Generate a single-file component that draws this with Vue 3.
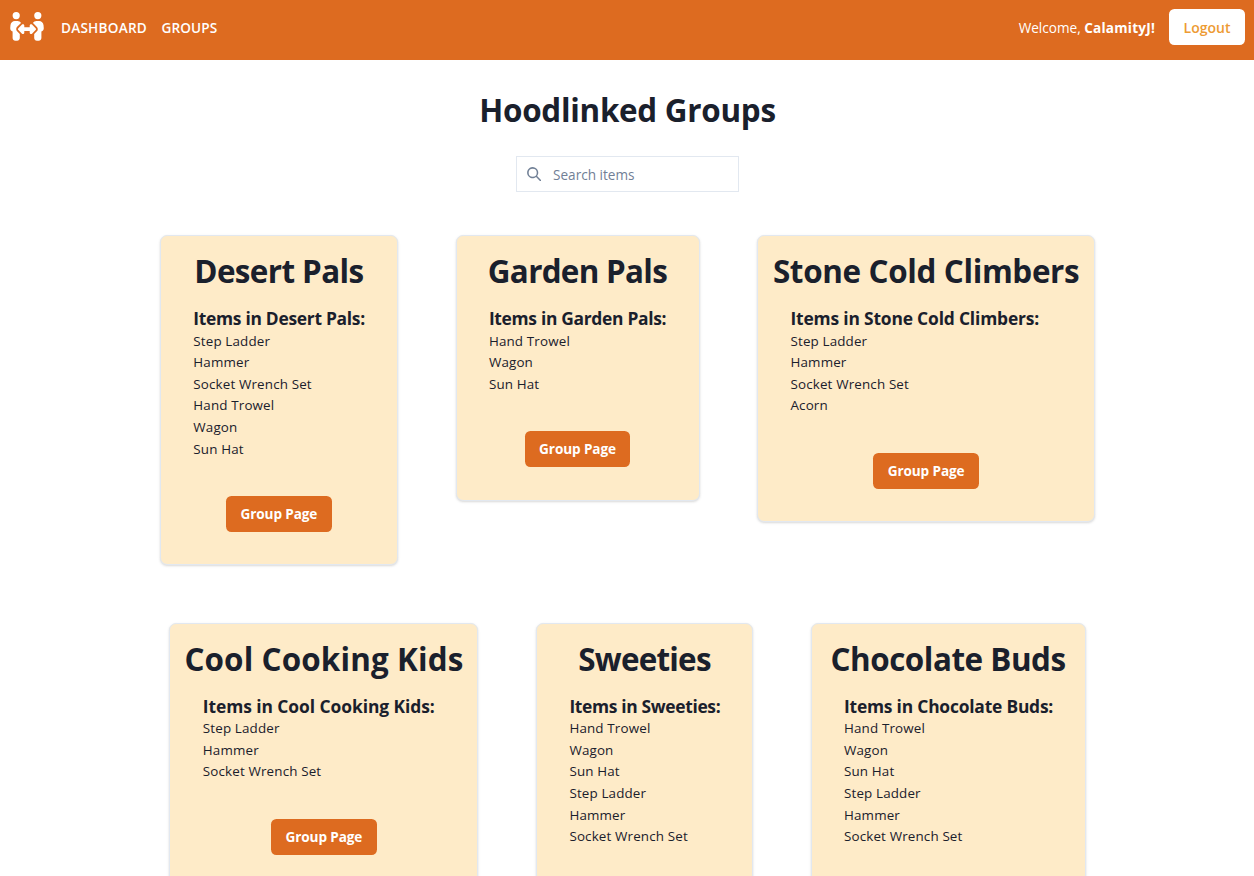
<script setup>
const rows = [
  [
    { name: 'Desert Pals', size: 'desert', link: true, items: ['Step Ladder', 'Hammer', 'Socket Wrench Set', 'Hand Trowel', 'Wagon', 'Sun Hat'] },
    { name: 'Garden Pals', size: 'garden', link: true, items: ['Hand Trowel', 'Wagon', 'Sun Hat'] },
    { name: 'Stone Cold Climbers', size: 'stone', link: true, items: ['Step Ladder', 'Hammer', 'Socket Wrench Set', 'Acorn'] },
  ],
  [
    { name: 'Cool Cooking Kids', size: 'cooking', link: true, items: ['Step Ladder', 'Hammer', 'Socket Wrench Set'] },
    { name: 'Sweeties', size: 'sweeties', items: ['Hand Trowel', 'Wagon', 'Sun Hat', 'Step Ladder', 'Hammer', 'Socket Wrench Set'] },
    { name: 'Chocolate Buds', size: 'chocolate', items: ['Hand Trowel', 'Wagon', 'Sun Hat', 'Step Ladder', 'Hammer', 'Socket Wrench Set'] },
  ],
]
</script>

<template>
  <div class="page">
    <header class="nav">
      <svg class="logo" viewBox="0 0 640 512" fill="currentColor" aria-hidden="true">
        <path d="M64 64a64 64 0 1 1 128 0A64 64 0 1 1 64 64zM25.9 233.4C29.3 191.9 64 160 105.6 160l44.8 0c27 0 51 13.4 65.5 34.1c-2.7 1.9-5.2 4-7.5 6.3l-64 64c-21.9 21.9-21.9 57.3 0 79.2L192 391.2 192 464c0 26.5-21.5 48-48 48l-32 0c-26.5 0-48-21.5-48-48l0-115.7c-26.5-9.5-44.7-35.8-42.2-65.6l4.1-49.3zM448 64a64 64 0 1 1 128 0A64 64 0 1 1 448 64zM431.6 200.4c-2.3-2.3-4.9-4.4-7.5-6.3c14.5-20.7 38.6-34.1 65.5-34.1l44.8 0c41.6 0 76.3 31.9 79.7 73.4l4.1 49.3c2.5 29.8-15.7 56.1-42.2 65.6L576 464c0 26.5-21.5 48-48 48l-32 0c-26.5 0-48-21.5-48-48l0-72.7 47.6-47.6c21.9-21.9 21.9-57.3 0-79.2l-64-64zM272 240l0 32 96 0 0-32c0-9.7 5.8-18.5 14.8-22.2s19.3-1.7 26.2 5.2l64 64c9.4 9.4 9.4 24.6 0 33.9l-64 64c-6.9 6.9-17.2 8.9-26.2 5.2s-14.8-12.5-14.8-22.2l0-32-96 0 0 32c0 9.7-5.8 18.5-14.8 22.2s-19.3 1.7-26.2-5.2l-64-64c-9.4-9.4-9.4-24.6 0-33.9l64-64c6.9-6.9 17.2-8.9 26.2-5.2s14.8 12.5 14.8 22.2z" />
      </svg>
      <nav class="links">
        <a class="link dash">DASHBOARD</a>
        <a class="link groups">GROUPS</a>
      </nav>
      <div class="welcome"><span class="hello">Welcome,</span> <strong>CalamityJ!</strong></div>
      <button class="logout">Logout</button>
    </header>

    <main>
      <h1 class="title">Hoodlinked Groups</h1>
      <label class="search">
        <svg viewBox="0 0 24 24" fill="currentColor" aria-hidden="true">
          <path d="M23.384,21.619,16.855,15.09a9.284,9.284,0,1,0-1.768,1.768l6.529,6.529a1.266,1.266,0,0,0,1.768,0A1.251,1.251,0,0,0,23.384,21.619ZM2.75,9.5a6.75,6.75,0,1,1,6.75,6.75A6.758,6.758,0,0,1,2.75,9.5Z" />
        </svg>
        <span>Search items</span>
      </label>

      <section v-for="(row, i) in rows" :key="i" class="row">
        <article v-for="g in row" :key="g.name" class="card" :class="g.size">
          <h2>{{ g.name }}</h2>
          <div class="body">
            <h3>Items in {{ g.name }}:</h3>
            <ul>
              <li v-for="item in g.items" :key="item">{{ item }}</li>
            </ul>
          </div>
          <button v-if="g.link" class="go">Group Page</button>
        </article>
      </section>
    </main>
  </div>
</template>

<style>
body {
  margin: 0;
  overflow: hidden;
  background: #fff;
}
</style>

<style scoped>
.page {
  height: 876px;
  overflow: hidden;
  font-family: "Segoe UI", "Open Sans", "Noto Sans", sans-serif;
  font-size: 14px;
  line-height: 21.6px;
  color: #1a202c;
}
h1, h2, h3, ul {
  margin: 0;
  padding: 0;
  font-weight: 700;
}
button {
  font: inherit;
  border: 0;
  padding: 0;
  white-space: nowrap;
}
.nav {
  display: flex;
  align-items: flex-start;
  box-sizing: border-box;
  height: 60px;
  padding: 9px 9px 0 9px;
  background: #dd6b20;
  color: #fff;
}
.logo {
  width: 36px;
  height: 28.8px;
  margin-top: 3px;
}
.links {
  display: flex;
  gap: 14.5px;
  margin: 8px 0 0 16px;
}
.link {
  font-weight: 600;
  font-size: 13.6px;
}
.dash {
  letter-spacing: 0.23px;
}
.groups {
  letter-spacing: 0.1px;
}
.welcome {
  margin: 8px 14px 0 auto;
  font-size: 13.6px;
  white-space: nowrap;
}
.welcome strong {
  font-weight: 700;
  letter-spacing: 0.2px;
}
.logout {
  width: 76px;
  height: 36px;
  padding-top: 2px;
  border-radius: 5.4px;
  background: #fff;
  color: #ed9b33;
  font-weight: 600;
}
main {
  display: flex;
  flex-direction: column;
  align-items: center;
  padding-left: 1px;
}
.title {
  margin-top: 28px;
  font-size: 31.4px;
  line-height: 43px;
  letter-spacing: -0.27px;
  white-space: nowrap;
}
.search {
  display: flex;
  align-items: center;
  box-sizing: border-box;
  width: 223px;
  height: 36px;
  margin: 25px 0 14.6px;
  padding-left: 10px;
  border: 1px solid #e2e8f0;
  color: #718096;
  font-size: 13.6px;
}
.search span {
  padding-top: 2px;
}
.search svg {
  width: 14.4px;
  height: 14.4px;
  margin: 0 11.6px 0 0;
}
.row {
  display: flex;
  align-items: flex-start;
}
.card {
  display: flex;
  flex-direction: column;
  align-items: center;
  box-sizing: border-box;
  min-height: 266px;
  margin: 28.8px;
  padding: 12.9px 0 32.5px;
  border: 1px solid #e2e8f0;
  border-radius: 7.2px;
  background: #feebc8;
  box-shadow: 0 1px 3px rgba(0, 0, 0, 0.1), 0 1px 2px rgba(0, 0, 0, 0.06);
}
.desert { width: 238px; --h2: -0.6px; --h3: -0.28px; }
.garden { width: 244px; --h2: -0.7px; --h3: -0.3px; }
.stone { width: 338px; --h2: -0.35px; --h3: -0.17px; }
.cooking { width: 309px; --h2: 0.12px; --h3: -0.06px; }
.sweeties { width: 217px; --h2: -0.77px; --h3: -0.33px; }
.chocolate { width: 275px; --h2: -0.47px; --h3: -0.2px; }
.card h2 {
  font-size: 31.4px;
  line-height: 43px;
  letter-spacing: var(--h2);
  white-space: nowrap;
}
.body {
  align-self: stretch;
  padding: 15.7px 0 35.8px 32.4px;
}
.card h3 {
  margin-bottom: 1px;
  font-size: 17.4px;
  line-height: 21.6px;
  letter-spacing: var(--h3);
  white-space: nowrap;
}
.card ul {
  list-style: none;
  font-weight: 400;
  font-size: 13.4px;
  letter-spacing: 0.15px;
}
.go {
  width: 105.6px;
  height: 36px;
  border-radius: 5.4px;
  background: #dd6b20;
  color: #fff;
  font-weight: 700;
  font-size: 13.6px;
  letter-spacing: -0.12px;
}
</style>
